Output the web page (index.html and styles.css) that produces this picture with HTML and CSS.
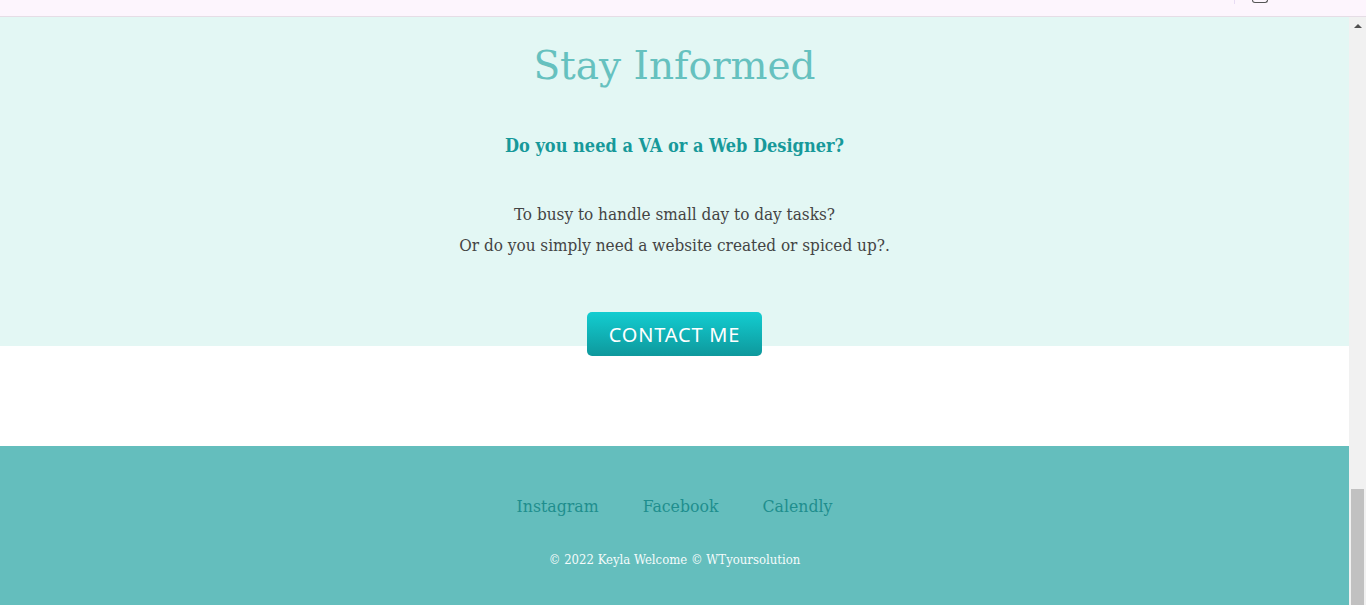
FILE: index.html
```html
<!DOCTYPE html>
<html lang="en">
<head>
<meta charset="utf-8">
<title>Stay Informed</title>
<link rel="stylesheet" href="styles.css">
</head>
<body>
<header class="topbar">
  <div class="topbar-tools">
    <span class="tool-divider"></span>
    <span class="tool-icon"></span>
  </div>
</header>
<div class="viewport">
  <main class="page">
    <section class="inform">
      <h1 class="inform-title">Stay Informed</h1>
      <h2 class="inform-sub">Do you need a VA or a Web Designer?</h2>
      <p class="inform-text">To busy to handle small day to day tasks?<br>Or do you simply need a website created or spiced up?.</p>
      <a class="contact-btn" href="#">CONTACT ME</a>
    </section>
    <div class="spacer"></div>
    <footer class="footer">
      <nav class="footer-links">
        <a href="#">Instagram</a>
        <a href="#">Facebook</a>
        <a href="#">Calendly</a>
      </nav>
      <p class="copyright">© 2022 Keyla Welcome © WTyoursolution</p>
    </footer>
  </main>
  <div class="scrollbar">
    <div class="scroll-up"></div>
    <div class="scroll-track"><div class="scroll-thumb"></div></div>
  </div>
</div>
</body>
</html>
```
FILE: styles.css
```css
* { box-sizing: border-box; }
html, body { margin: 0; padding: 0; height: 100%; overflow: hidden; }
body {
  font-family: "DejaVu Serif", "Liberation Serif", serif;
  display: flex;
  flex-direction: column;
  background: #fff;
}
.topbar {
  height: 17px;
  flex: none;
  background: #fdf5fd;
  border-bottom: 1px solid #e6dde6;
  display: flex;
  justify-content: flex-end;
  overflow: hidden;
}
.topbar-tools {
  display: flex;
  align-items: flex-start;
  margin-right: 98px;
  gap: 17px;
}
.tool-divider {
  width: 1px;
  height: 4px;
  background: #e8dcf4;
}
.tool-icon {
  width: 16px;
  height: 3px;
  border: 1px solid #555;
  border-top: none;
  border-radius: 0 0 3px 3px;
}
.viewport {
  flex: 1;
  display: flex;
  min-height: 0;
}
.page {
  flex: 1;
  display: flex;
  flex-direction: column;
}
.inform {
  background: #e3f7f4;
  height: 329px;
  flex: none;
  display: flex;
  flex-direction: column;
  align-items: center;
  text-align: center;
}
.inform-title {
  margin: 24px 0 0;
  font-weight: normal;
  font-size: 39px;
  line-height: 50px;
  color: #66c1bf;
}
.inform-sub {
  margin: 42px 0 0;
  font-size: 18px;
  font-stretch: condensed;
  line-height: 26px;
  font-weight: bold;
  color: #17999a;
}
.inform-text {
  margin: 40px 0 0;
  font-size: 17px;
  font-stretch: condensed;
  line-height: 31px;
  color: #444;
}
.contact-btn {
  flex: none;
  margin-top: 51px;
  width: 175px;
  height: 44px;
  display: flex;
  align-items: center;
  justify-content: center;
  border-radius: 5px;
  background: linear-gradient(#13cdd1, #0e989c);
  color: #fff;
  text-decoration: none;
  font-family: "Noto Sans", "DejaVu Sans", sans-serif;
  font-size: 20px;
  letter-spacing: 0.8px;
  position: relative;
  z-index: 1;
}
.spacer { height: 100px; flex: none; }
.footer {
  flex: 1;
  background: #64bebd;
  display: flex;
  flex-direction: column;
  align-items: center;
}
.footer-links {
  margin-top: 48px;
  display: flex;
  gap: 44px;
}
.footer-links a {
  color: #1f8e8e;
  text-decoration: none;
  font-size: 17.5px;
  font-stretch: condensed;
  line-height: 24px;
}
.copyright {
  margin: 33px 0 0;
  color: #f4fbfb;
  font-size: 13px;
  font-stretch: condensed;
  line-height: 18px;
}
.scrollbar {
  width: 17px;
  flex: none;
  background: #f1f1f1;
  display: flex;
  flex-direction: column;
}
.scroll-up {
  height: 17px;
  display: flex;
  align-items: center;
  justify-content: center;
}
.scroll-up::before {
  content: "";
  border-left: 4px solid transparent;
  border-right: 4px solid transparent;
  border-bottom: 4px solid #505050;
}
.scroll-track {
  flex: 1;
  display: flex;
  flex-direction: column;
  justify-content: flex-end;
  padding: 0 2px;
}
.scroll-thumb {
  height: 116px;
  background: #c1c1c1;
}
```
